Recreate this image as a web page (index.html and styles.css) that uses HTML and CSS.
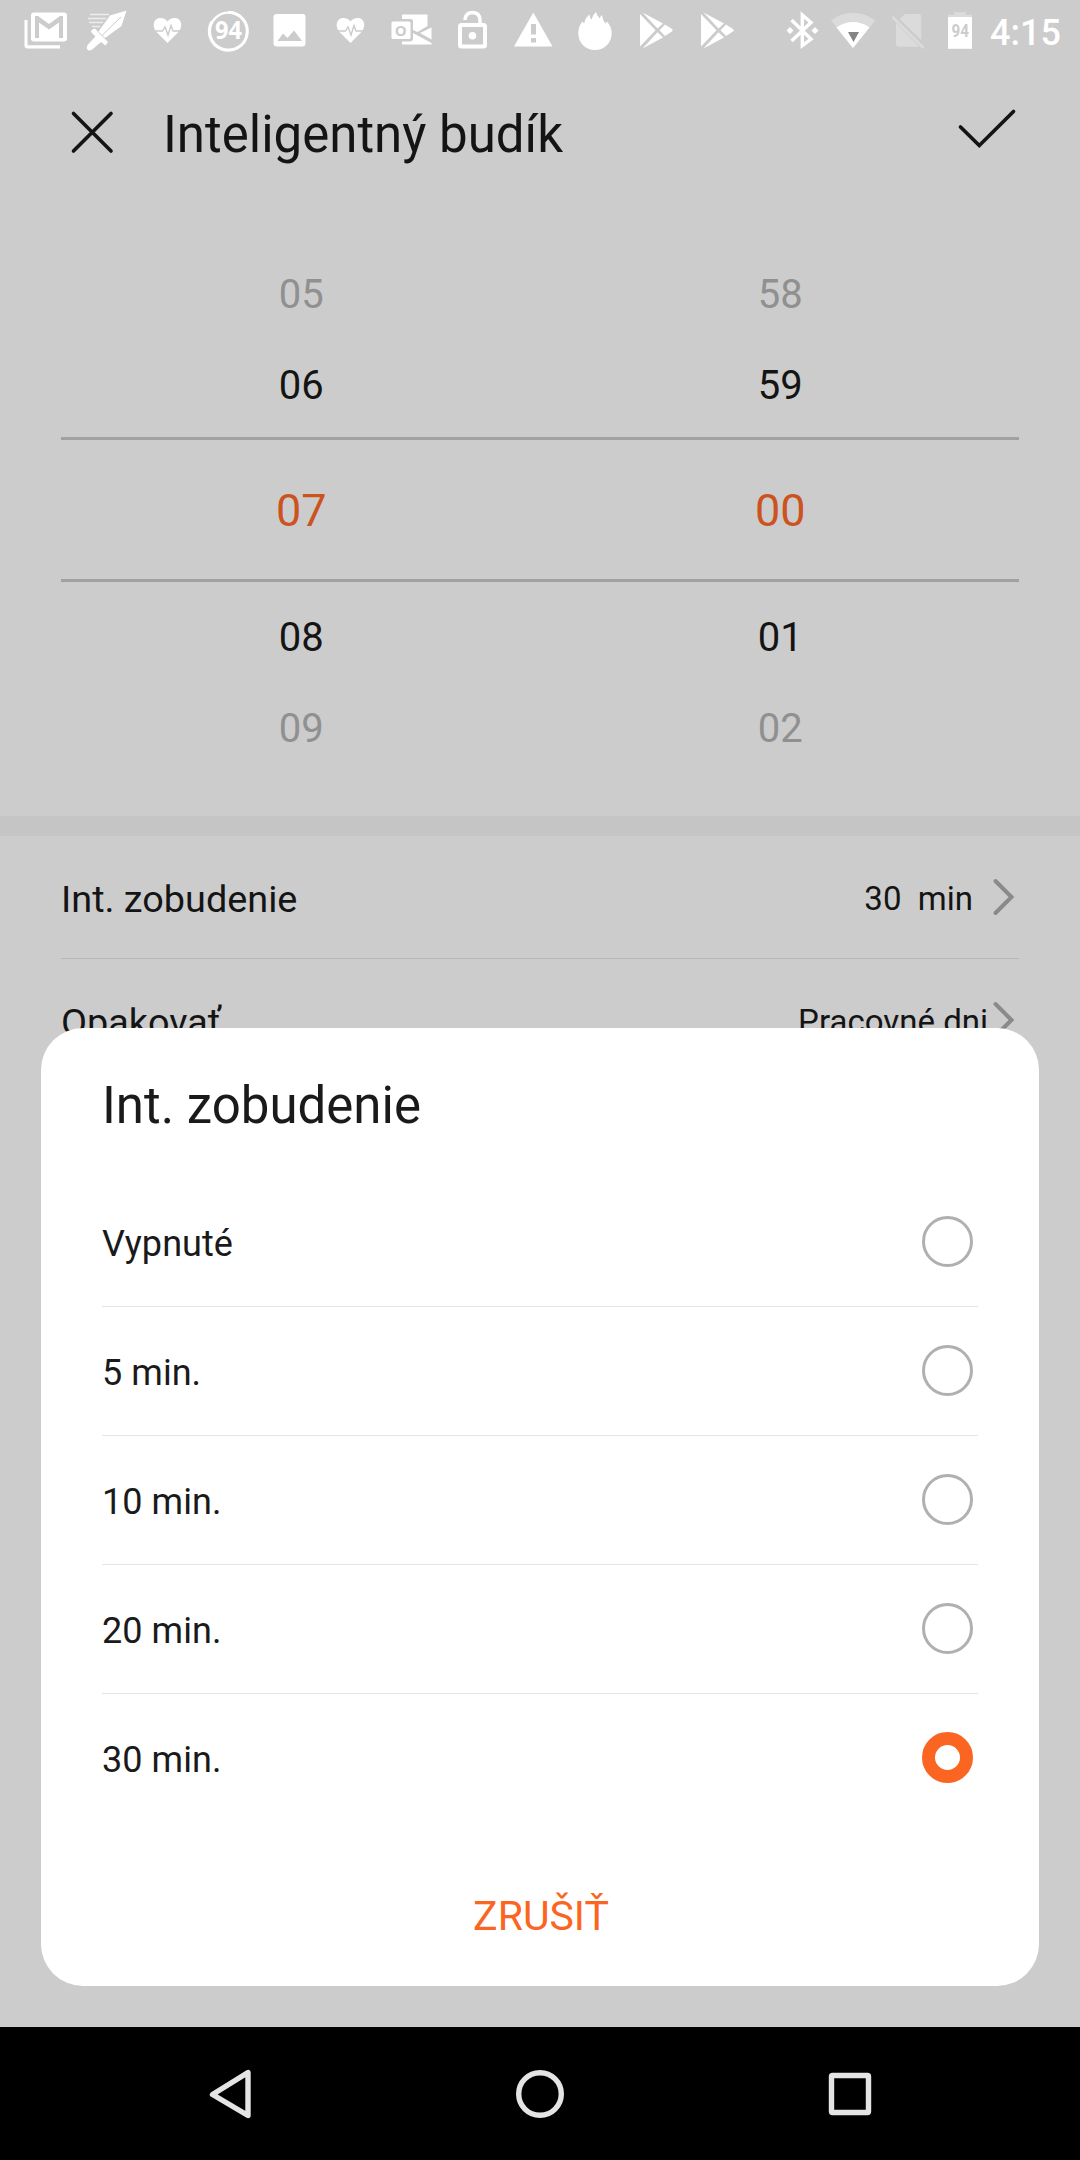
FILE: index.html
```html
<!DOCTYPE html>
<html lang="sk">
<head>
  <meta charset="UTF-8" />
  <meta name="viewport" content="width=device-width, initial-scale=1" />
  <title>Inteligentný budík</title>
  <link rel="stylesheet" href="styles.css">
</head>
<body>

  <div class="screen">
    <div class="status-bar">
      <div class="notifications">
        <!-- mail -->
        <svg width="61" height="63" viewBox="15 0 61 63">
          <path d="M24.500 20V45.500Q24.500 48.500 27.500 48.500H60V45.300H27.500V20Z" fill="#fff"/>
          <path fill-rule="evenodd" d="M34 12.500H64Q67 12.500 67 15.500V38.500Q67 41.500 64 41.500H34Q31 41.500 31 38.500V15.500Q31 12.500 34 12.500ZM35 16V38H39V22.500L49 29.500L59 22.500V38H63V16H60L49 24L38 16Z" fill="#fff"/>
        </svg>
        <!-- sword -->
        <svg width="61" height="63" viewBox="76 0 61 63">
          <path d="M126.500 10.500L110 15.500L98.500 31.500L105 38L121.500 26Z" fill="#fff"/>
          <path d="M121 17L102 35.500" stroke="#ccc" stroke-width="1"/>
          <path d="M91.500 30L95 28.500L99 33L104 38L108 42L105.500 45.500L101 42L94 48Q91 51.500 88 50Q85.500 48 88 44.500L95.500 36.500L91 32Z" fill="#fff"/>
          <path d="M90 14.500H109M88 18.500H106M89 22.500H103M92 26.500H100" stroke="#fff" stroke-width="1.600" opacity=".65"/>
        </svg>
        <!-- heart rate -->
        <svg width="61" height="63" viewBox="137 0 61 63">
          <path d="M167.500 43L157 32.500C151 26 154 18 160.500 18Q165 18 167.500 21.500Q170 18 174.500 18C181 18 184 26 178 32.500Z" fill="#fff"/>
          <path d="M154 31H162.500L165 27L168 35L171 25.500L173 31H181" fill="none" stroke="#ccc" stroke-width="1.400"/>
        </svg>
        <!-- battery ring -->
        <svg width="61" height="63" viewBox="198 0 61 63">
          <circle cx="228.500" cy="31.300" r="18.700" fill="none" stroke="#fff" stroke-width="2.400"/>
          <path d="M228.500 12.200A19 19 0 1 1 212 21.500" fill="none" stroke="#fff" stroke-width="3"/>
          <text x="228.500" y="39.300" textLength="27" lengthAdjust="spacingAndGlyphs" class="ring-text">94</text>
        </svg>
        <!-- picture -->
        <svg width="61" height="63" viewBox="259 0 61 63">
          <path fill-rule="evenodd" d="M277 14H302.500Q305.500 14 305.500 17V43.500Q305.500 46.500 302.500 46.500H277Q273.500 46.500 273.500 43.500V17Q273.500 14 277 14ZM277.500 41H302L294 30.500L287.500 38L283 33.500Z" fill="#fff"/>
        </svg>
        <!-- heart rate -->
        <svg width="61" height="63" viewBox="137 0 61 63">
          <path d="M167.500 43L157 32.500C151 26 154 18 160.500 18Q165 18 167.500 21.500Q170 18 174.500 18C181 18 184 26 178 32.500Z" fill="#fff"/>
          <path d="M154 31H162.500L165 27L168 35L171 25.500L173 31H181" fill="none" stroke="#ccc" stroke-width="1.400"/>
        </svg>
        <!-- outlook -->
        <svg width="61" height="63" viewBox="381 0 61 63">
          <path d="M402 14.500H427.500V26L417.500 32L413 30V21Q413 19 410 19H402Z" fill="#fff"/>
          <path d="M431.500 27.500V39.500L420 33Z" fill="#fff"/>
          <path d="M402 41.500H410Q413 41.500 413 38.500V33L431.500 43V44.500H402Z" fill="#fff"/>
          <rect x="391.500" y="21.500" width="19" height="17.500" rx="1.500" fill="#fff"/>
          <text x="400.800" y="36" class="outlook-text">O</text>
        </svg>
        <!-- open lock -->
        <svg width="61" height="63" viewBox="442 0 61 63">
          <rect x="460" y="25" width="25" height="21.500" rx="1.500" fill="none" stroke="#fff" stroke-width="4"/>
          <path d="M465 20Q465.500 12.500 472.800 12.500Q480 13 480 20V24" fill="none" stroke="#fff" stroke-width="3.500"/>
          <circle cx="472.500" cy="35.800" r="3.800" fill="#fff"/>
        </svg>
        <!-- warning -->
        <svg width="61" height="63" viewBox="503 0 61 63">
          <path fill-rule="evenodd" d="M533.300 12.500L552.500 46.500H514ZM531 24V34.500H536V24ZM531 38V42.500H536V38Z" fill="#fff"/>
        </svg>
        <!-- flame -->
        <svg width="61" height="63" viewBox="564 0 61 63">
          <path d="M578.300 33C578.300 28 580 24.500 582.500 21.500L584.200 23.500Q585 18 589.500 14.500Q589.800 18 591.500 19.500Q592.500 15 596 12Q596.500 15.500 599.800 18.500Q600 16.500 602 15Q602.500 20 605.500 23.500L607 21.500C610 25 611.700 28.500 611.700 33C611.700 43 604.500 50 595 50C585.500 50 578.300 43 578.300 33Z" fill="#fff"/>
        </svg>
        <!-- play store -->
        <svg width="61" height="63" viewBox="625 0 61 63">
          <path d="M640 14L655.500 30.300L640 46.500ZM642.500 12.500L663 23.500L657.500 28.500ZM665 24.500L672 29Q673.500 30.300 672 31.500L665 36L659.500 30.300ZM657.500 32.200L663 37.500L642.500 48.500Z" fill="#fff"/>
        </svg>
        <!-- play store -->
        <svg width="61" height="63" viewBox="625 0 61 63">
          <path d="M640 14L655.500 30.300L640 46.500ZM642.500 12.500L663 23.500L657.500 28.500ZM665 24.500L672 29Q673.500 30.300 672 31.500L665 36L659.500 30.300ZM657.500 32.200L663 37.500L642.500 48.500Z" fill="#fff"/>
        </svg>
      </div>
      <div class="system-icons">
        <!-- bluetooth -->
        <svg width="46" height="63" viewBox="779 0 46 63">
          <path d="M791.500 20L811 39L802.300 45.500V15L811 22.500L791.500 41" fill="none" stroke="#fff" stroke-width="3.400"/>
          <path d="M786.500 30.500L790 27L793.500 30.500L790 34ZM811.500 30.500L815 27L818.500 30.500L815 34Z" fill="#fff"/>
        </svg>
        <!-- wifi -->
        <svg width="56" height="63" viewBox="825 0 56 63">
          <path d="M853 48L831 20.500Q841 12.700 853 12.700Q865 12.700 875.300 20.500Z" fill="#dbdbdb"/>
          <path d="M853 48L836.500 27.500Q844 22 853 22Q862 22 869.500 27.500Z" fill="#fff"/>
          <path d="M848 32H859L853.500 42Z" fill="#858585"/>
        </svg>
        <!-- no sim -->
        <svg width="54" height="63" viewBox="881 0 54 63">
          <path d="M905 14H918.500Q921.200 14 921.200 17V40L899.500 19ZM896 23L919 46.800H899Q896 46.800 896 43.800Z" fill="#dbdbdb"/>
          <path d="M892.500 17L923.500 48" stroke="#dbdbdb" stroke-width="2.800"/>
        </svg>
        <!-- battery -->
        <svg width="50" height="63" viewBox="935 0 50 63">
          <path d="M948 17V14.800H954V12.300H966V14.800H972V17Z" fill="#dbdbdb"/>
          <rect x="948" y="17" width="24" height="31.800" fill="#fff"/>
          <text x="951.500" y="37.300" textLength="17.500" lengthAdjust="spacingAndGlyphs" class="battery-text">94</text>
        </svg>
        <span class="clock">4:15</span>
      </div>
    </div>

    <header class="app-header">
      <svg class="close" width="45" height="45" viewBox="0 0 45 45">
        <path d="M3.500 3.500L41 41M41 3.500L3.500 41"/>
      </svg>
      <h1>Inteligentný budík</h1>
      <svg class="confirm" width="60" height="44" viewBox="0 0 60 44">
        <path d="M3.500 21L22.300 39.500L56.500 5.500"/>
      </svg>
    </header>

    <section class="picker">
      <div class="picker-row faded"><span>05</span><span>58</span></div>
      <div class="picker-row"><span>06</span><span>59</span></div>
      <div class="picker-row selected"><span>07</span><span>00</span></div>
      <div class="picker-row"><span>08</span><span>01</span></div>
      <div class="picker-row faded"><span>09</span><span>02</span></div>
    </section>

    <main class="settings">
      <div class="setting">
        <span class="setting-label">Int. zobudenie</span>
        <span class="setting-value wide">30&nbsp; min</span>
        <svg width="25" height="40" viewBox="0 0 25 40"><path d="M3.500 4L19.500 20L3.500 36"/></svg>
      </div>
      <div class="setting">
        <span class="setting-label">Opakovať</span>
        <span class="setting-value">Pracovné dni</span>
        <svg width="25" height="40" viewBox="0 0 25 40"><path d="M3.500 4L19.500 20L3.500 36"/></svg>
      </div>
    </main>

    <nav class="nav-bar">
      <svg width="310" height="133" viewBox="75 2027 310 133">
        <path d="M212.500 2094.500L248 2072.500V2115.500Z"/>
      </svg>
      <svg width="310" height="133" viewBox="385 2027 310 133">
        <circle cx="540" cy="2094" r="21.300"/>
      </svg>
      <svg width="310" height="133" viewBox="695 2027 310 133">
        <rect x="831.500" y="2075.500" width="37" height="37" rx="1"/>
      </svg>
    </nav>

    <div class="dialog">
      <h2>Int. zobudenie</h2>
      <ul class="options">
        <li><span>Vypnuté</span><i class="radio"></i></li>
        <li><span>5 min.</span><i class="radio"></i></li>
        <li><span>10 min.</span><i class="radio"></i></li>
        <li><span>20 min.</span><i class="radio"></i></li>
        <li><span>30 min.</span><i class="radio checked"></i></li>
      </ul>
      <button class="cancel">ZRUŠIŤ</button>
    </div>
  </div>

</body>
</html>
```

FILE: styles.css
```css
* {
  box-sizing: border-box;
  margin: 0;
  padding: 0;
}

body {
  font-family: Roboto, sans-serif;
  background: #ccc;
  color: #141414;
}

svg {
  display: block;
  flex: none;
}

.screen {
  position: relative;
  width: 1080px;
  height: 2160px;
  display: flex;
  flex-direction: column;
  overflow: hidden;
}

/* Status bar */
.status-bar {
  height: 63px;
  padding: 0 20px 0 15px;
  display: flex;
  justify-content: space-between;
}

.notifications,
.system-icons {
  display: flex;
}

.ring-text {
  font: 700 24.5px "Open Sans", sans-serif;
  text-anchor: middle;
  fill: #fff;
}

.outlook-text {
  font: 700 15px "Open Sans", sans-serif;
  text-anchor: middle;
  fill: #ccc;
}

.battery-text {
  font: 700 17.5px Roboto, sans-serif;
  fill: #ccc;
}

.clock {
  width: 75px;
  padding-left: 5px;
  font-size: 36px;
  font-weight: 500;
  line-height: 66px;
  color: #fff;
  white-space: nowrap;
}

/* Header */
.app-header {
  height: 142px;
  padding: 0 63px 0 70px;
  display: flex;
  align-items: center;
}

.app-header svg {
  fill: none;
  stroke: #141414;
  stroke-width: 3.7;
  stroke-linecap: round;
}

.app-header .close {
  margin-bottom: 4px;
}

.app-header .confirm {
  margin: 0 0 12px auto;
}

.app-header h1 {
  margin-left: 48px;
  font-size: 51px;
  font-weight: 400;
}

/* Time picker */
.picker {
  height: 611px;
  padding: 44px 61px 0;
}

.picker-row {
  display: flex;
  height: 91px;
  line-height: 91px;
  font-size: 40px;
  text-align: center;
}

.picker-row span {
  flex: 1;
  padding-left: 1.5px;
}

.picker-row.faded {
  color: #909090;
}

.picker-row.selected {
  height: 145px;
  margin: 6px 0 10px;
  border-top: 3px solid #a1a1a1;
  border-bottom: 3px solid #a1a1a1;
  font-size: 45px;
  line-height: 141px;
  color: #cc531d;
}

/* Settings list */
.settings {
  flex: 1;
  padding: 0 61px;
  border-top: 20px solid #c5c5c5;
}

.setting {
  display: flex;
  align-items: center;
  height: 123px;
  border-bottom: 1px solid #b7b7b7;
}

.setting-label {
  flex: 1;
  padding-top: 4px;
  font-size: 37.8px;
}

.setting-value {
  padding-top: 2px;
  margin-right: 4px;
  font-size: 33px;
}

.setting-value.wide {
  margin-right: 19px;
}

.setting svg {
  margin-right: 2px;
  fill: none;
  stroke: #8a8a8a;
  stroke-width: 4;
  stroke-linecap: round;
}

/* Navigation bar */
.nav-bar {
  height: 133px;
  display: flex;
  justify-content: center;
  background: #000;
}

.nav-bar svg {
  fill: none;
  stroke: #e4e4e4;
  stroke-width: 5.4;
  stroke-linejoin: round;
}

/* Dialog */
.dialog {
  position: absolute;
  top: 1028px;
  left: 41px;
  width: 998px;
  height: 958px;
  padding: 0 61px;
  display: flex;
  flex-direction: column;
  background: #fff;
  border-radius: 42px;
  color: #1a1a1a;
}

.dialog h2 {
  height: 150px;
  line-height: 155px;
  font-size: 51px;
  font-weight: 400;
}

.options {
  list-style: none;
}

.options li {
  display: flex;
  align-items: center;
  justify-content: space-between;
  height: 129px;
  padding-right: 5.5px;
  border-bottom: 1px solid #e5e5e5;
  font-size: 36px;
}

.options li:last-child {
  border-bottom-color: transparent;
}

.options span {
  padding-top: 3px;
  letter-spacing: 0.05px;
}

.radio {
  width: 51px;
  height: 51px;
  margin-bottom: 1px;
  border: 3px solid #b0b0b0;
  border-radius: 50%;
}

.radio.checked {
  border: 13px solid #fb6522;
}

.cancel {
  height: 140px;
  margin-top: auto;
  padding-left: 2px;
  border: none;
  background: none;
  font-family: inherit;
  font-size: 41px;
  color: #fb6522;
}
```
